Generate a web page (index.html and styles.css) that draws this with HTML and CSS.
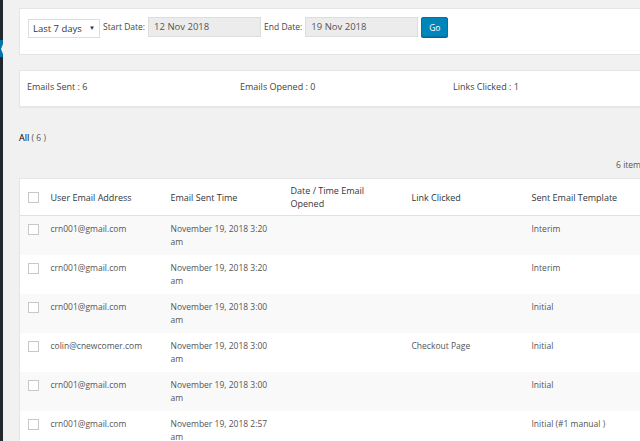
FILE: index.html
```html
<!DOCTYPE html>
<html>
<head>
<meta charset="utf-8">
<link rel="stylesheet" href="styles.css">
</head>
<body>
<div class="sidebar"><div class="sb-current"><span class="notch"></span></div></div>
<div class="main">
  <div class="filter-box">
    <div class="select">Last 7 days <span class="caret">▼</span></div>
    <span class="lbl">Start Date:</span>
    <div class="date-input">12 Nov 2018</div>
    <span class="lbl">End Date:</span>
    <div class="date-input">19 Nov 2018</div>
    <button class="go">Go</button>
  </div>
  <div class="stats-box">
    <div class="stat">Emails Sent : 6</div>
    <div class="stat">Emails Opened : 0</div>
    <div class="stat">Links Clicked : 1</div>
  </div>
  <div class="subsub"><span class="all">All</span> <span class="count">( 6 )</span></div>
  <div class="tablenav">6 items</div>
  <table class="list">
    <colgroup>
      <col class="c-cb"><col class="c-col"><col class="c-col"><col class="c-col3"><col class="c-col"><col>
    </colgroup>
    <thead>
      <tr>
        <th class="cb"><span class="box"></span></th>
        <th>User Email Address</th>
        <th>Email Sent Time</th>
        <th>Date / Time Email Opened</th>
        <th>Link Clicked</th>
        <th>Sent Email Template</th>
      </tr>
    </thead>
    <tbody>
      <tr class="alt">
        <td class="cb"><span class="box"></span></td>
        <td>crn001@gmail.com</td><td>November 19, 2018 3:20 am</td><td></td><td></td><td>Interim</td>
      </tr>
      <tr>
        <td class="cb"><span class="box"></span></td>
        <td>crn001@gmail.com</td><td>November 19, 2018 3:20 am</td><td></td><td></td><td>Interim</td>
      </tr>
      <tr class="alt">
        <td class="cb"><span class="box"></span></td>
        <td>crn001@gmail.com</td><td>November 19, 2018 3:00 am</td><td></td><td></td><td>Initial</td>
      </tr>
      <tr>
        <td class="cb"><span class="box"></span></td>
        <td>colin@cnewcomer.com</td><td>November 19, 2018 3:00 am</td><td></td><td>Checkout Page</td><td>Initial</td>
      </tr>
      <tr class="alt">
        <td class="cb"><span class="box"></span></td>
        <td>crn001@gmail.com</td><td>November 19, 2018 3:00 am</td><td></td><td></td><td>Initial</td>
      </tr>
      <tr>
        <td class="cb"><span class="box"></span></td>
        <td>crn001@gmail.com</td><td>November 19, 2018 2:57 am</td><td></td><td></td><td>Initial (#1 manual )</td>
      </tr>
    </tbody>
  </table>
</div>
</body>
</html>
```
FILE: styles.css
```css
html, body {
  margin: 0;
  padding: 0;
  height: 100%;
  overflow: hidden;
}
body {
  background: #f1f1f1;
  font-family: "Open Sans", "Noto Sans", sans-serif;
  font-size: 9px;
  color: #444;
  display: flex;
  align-items: stretch;
}
.sidebar {
  width: 3px;
  flex: none;
  background: #23282d;
  padding-top: 40px;
}
.sb-current {
  height: 17px;
  background: #0073aa;
  display: flex;
  align-items: center;
  justify-content: flex-end;
}
.notch {
  width: 0;
  height: 0;
  border-top: 5px solid transparent;
  border-bottom: 5px solid transparent;
  border-right: 2px solid #f1f1f1;
}
.main {
  flex: none;
  width: 626px;
  margin-left: 16px;
}
.filter-box {
  margin-top: 8px;
  height: 45px;
  box-sizing: content-box;
  background: #fff;
  border: 1px solid #e5e5e5;
  padding: 0 8px;
  display: flex;
  align-items: flex-start;
}
.select {
  margin-top: 10px;
  width: 72px;
  height: 19px;
  box-sizing: border-box;
  border: 1px solid #ddd;
  background: #fff;
  color: #32373c;
  font-size: 9.5px;
  line-height: 17px;
  padding-left: 4px;
  position: relative;
}
.caret {
  position: absolute;
  right: 4px;
  top: 0;
  font-size: 6px;
  color: #333;
}
.lbl {
  margin-top: 8px;
  line-height: 20px;
  font-size: 8.5px;
  color: #444;
  padding: 0 3px 0 3px;
}
.date-input {
  margin-top: 8px;
  width: 113px;
  height: 20px;
  box-sizing: border-box;
  background: #ececec;
  border: 1px solid #ddd;
  color: #555;
  font-size: 9.5px;
  line-height: 18px;
  padding-left: 5px;
}
.go {
  margin-top: 8px;
  margin-left: 3px;
  width: 27px;
  height: 20px;
  background: #0085ba;
  border: 1px solid #0073aa;
  border-radius: 2px;
  color: #fff;
  font-family: "Open Sans", "Noto Sans", sans-serif;
  font-size: 8.5px;
  padding: 0;
  box-shadow: 0 1px 0 #006799;
}
.stats-box {
  margin-top: 15px;
  height: 35px;
  background: #fff;
  border: 1px solid #e5e5e5;
  padding: 0 7px;
  display: flex;
  align-items: flex-start;
  box-shadow: 0 1px 1px rgba(0,0,0,0.04);
}
.stat {
  width: 213px;
  flex: none;
  padding-top: 10px;
  line-height: 12px;
  color: #444;
}
.subsub {
  margin-top: 24px;
  line-height: 13px;
  color: #000;
}
.subsub .count {
  color: #555;
  font-size: 8.5px;
}
.tablenav {
  margin-top: 15px;
  text-align: right;
  line-height: 12px;
  color: #555;
  font-size: 8.5px;
}
.list {
  margin-top: 7px;
  width: 100%;
  border-collapse: collapse;
  table-layout: fixed;
  background: #fff;
  border: 1px solid #e5e5e5;
}
.c-cb { width: 23px; }
.c-col { width: 120px; }
.c-col3 { width: 121px; }
.list th {
  text-align: left;
  font-weight: normal;
  color: #32373c;
  padding: 5px 10px 5px 8px;
  height: 26px;
  line-height: 13px;
  vertical-align: middle;
  border-bottom: 1px solid #e1e1e1;
}
.list td {
  padding: 7px 10px 6px 8px;
  line-height: 12.6px;
  height: 26px;
  vertical-align: top;
  color: #555;
  font-size: 8.5px;
}
.list tr.alt td {
  background: #f9f9f9;
}
.list .cb {
  padding: 0 0 0 8px;
}
.list td.cb {
  padding-top: 8px;
}
.box {
  display: block;
  width: 11px;
  height: 11px;
  box-sizing: border-box;
  border: 1px solid #c8c8c8;
  background: #fff;
}
```
